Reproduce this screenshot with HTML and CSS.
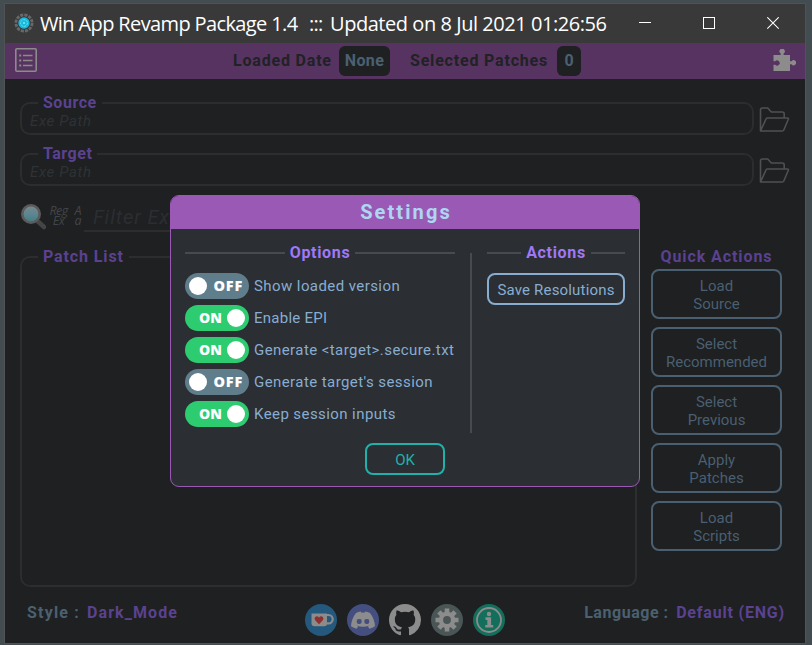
FILE: index.html
```html
<!DOCTYPE html>
<html lang="en">
<head>
<meta charset="utf-8">
<title>Win App Revamp Package 1.4</title>
<link rel="stylesheet" href="styles.css">
</head>
<body>
<div class="window">
  <header class="titlebar">
    <svg class="app-icon" width="20" height="20" viewBox="0 0 20 20">
      <circle cx="10" cy="10" r="8" fill="none" stroke="#686868" stroke-width="3" stroke-dasharray="3.1 1.1"/>
      <circle cx="10" cy="10" r="6.5" fill="#333b40"/>
      <circle cx="10" cy="10" r="5.7" fill="#19b9dc"/>
      <circle cx="10" cy="10" r="3.4" fill="none" stroke="#69e3f5" stroke-width="1" stroke-dasharray="2 1"/>
      <circle cx="10" cy="10" r="1" fill="#7cecfa"/>
    </svg>
    <h1 class="title"><span class="title-name">Win App Revamp Package 1.4</span><span class="title-sep">:::</span><span class="title-date">Updated on 8 Jul 2021 01:26:56</span></h1>
    <div class="controls">
      <svg width="12" height="14" viewBox="0 0 12 14"><path d="M0 5.5h12" stroke="#fff"/></svg>
      <svg width="12" height="14" viewBox="0 0 12 14"><rect x=".5" y=".5" width="11" height="11" fill="none" stroke="#fff"/></svg>
      <svg width="12" height="14" viewBox="0 0 12 14"><path d="M.3 .3l11.4 11.4M11.700 .3L.3 11.700" stroke="#fff" stroke-width="1.100"/></svg>
    </div>
  </header>

  <div class="statusbar">
    <svg width="22" height="24" viewBox="0 0 22 24" fill="none" stroke="#8b8b8b">
      <rect x=".8" y=".8" width="20.400" height="22.400" rx="1" stroke-width="1.600"/>
      <path d="M8 7.500h9.500M8 12.500h9.500M8 17.500h9.500" stroke-width="1.500"/>
      <path d="M4.200 7.500h2M4.200 12.500h2M4.200 17.500h2" stroke-width="2"/>
    </svg>
    <div class="status">
      <span class="status-label">Loaded Date</span><span class="badge badge-date">None</span>
      <span class="status-label status-patches">Selected Patches</span><span class="badge">0</span>
    </div>
    <svg class="puzzle" width="23" height="23" viewBox="0 0 23 23">
      <path fill="#8c8c8c" d="M.5 6h7.200V4.400a2.600 2.600 0 1 1 2.900 0V6H17v6.200h1.600a2.500 2.500 0 1 1 0 3H17V22H.5v-6.200h1.700a2.600 2.600 0 1 0 0-3.600H.5z"/>
    </svg>
  </div>

  <main class="content">
    <div class="path-row">
      <fieldset class="box path-box"><legend class="legend source">Source</legend><span class="placeholder">Exe Path</span></fieldset>
      <svg class="folder" width="31" height="26" viewBox="0 0 31 26"><path d="M1.500 24V3q0-2 2-2h5.200l3.600 4h10.900q2 0 2 2v4M1.500 24L7 12q.5-1 1.500-1h20q1.300 0 .8 1.300l-4.500 10.700q-.4 1-1.500 1H1.500z"/></svg>
    </div>
    <div class="path-row">
      <fieldset class="box path-box"><legend class="legend target">Target</legend><span class="placeholder">Exe Path</span></fieldset>
      <svg class="folder" width="31" height="26" viewBox="0 0 31 26"><path d="M1.500 24V3q0-2 2-2h5.200l3.600 4h10.900q2 0 2 2v4M1.500 24L7 12q.5-1 1.500-1h20q1.300 0 .8 1.300l-4.500 10.700q-.4 1-1.500 1H1.500z"/></svg>
    </div>

    <div class="filter-row">
      <svg width="26" height="27" viewBox="0 0 26 27">
        <defs><linearGradient id="lens" x1="0" y1="0" x2="0" y2="1"><stop offset="0" stop-color="#7b878c"/><stop offset=".5" stop-color="#5d8791"/><stop offset="1" stop-color="#447887"/></linearGradient></defs>
        <path d="M18 18.500l6 5.500" stroke="#454545" stroke-width="4.500" stroke-linecap="round"/>
        <circle cx="11" cy="11" r="8.700" fill="url(#lens)" stroke="#5b5b5b" stroke-width="2.600"/>
      </svg>
      <span class="flag flag-regex"><span>Reg</span><span>Ex</span></span>
      <span class="flag flag-case"><span>A</span><span>a</span></span>
      <span class="filter-input">Filter Expression</span>
    </div>

    <div class="workspace">
      <fieldset class="box patch-box"><legend class="legend patch">Patch List</legend></fieldset>
      <aside class="quick">
        <h2 class="quick-title">Quick Actions</h2>
        <button class="btn quick-btn">Load<br>Source</button>
        <button class="btn quick-btn">Select<br>Recommended</button>
        <button class="btn quick-btn">Select<br>Previous</button>
        <button class="btn quick-btn">Apply<br>Patches</button>
        <button class="btn quick-btn">Load<br>Scripts</button>
      </aside>
    </div>
  </main>

  <footer class="footer">
    <div class="setting"><span class="key style-key">Style :</span><span class="value style-value">Dark_Mode</span></div>
    <div class="links">
      <svg width="32" height="32" viewBox="0 0 32 32">
        <circle cx="16" cy="16" r="16" fill="#24587d"/>
        <path d="M22 11h1.500a4.200 4.200 0 0 1 0 8.400H21" fill="none" stroke="#8c8c8c" stroke-width="2.200"/>
        <path d="M6.500 9.500H22v10q0 2.700-2.700 2.700H9.500q-3 0-3-3z" fill="#8c8c8c"/>
        <path d="M14 20.200l-3.800-4q-1.500-2 .2-3.500 1.900-1.300 3.600.7 1.700-2 3.600-.7 1.700 1.500.2 3.500z" fill="#8f302f"/>
      </svg>
      <svg width="32" height="32" viewBox="0 0 32 32">
        <circle cx="16" cy="16" r="16" fill="#444f80"/>
        <path fill="#8c8c8c" fill-rule="evenodd" d="M9 9q2.200-1.300 4.800-1.500l.7 1.200q1.500-.2 3 0l.7-1.200q2.600.2 4.800 1.500 4.700 6 5 13.300-2.800 2-5.600 2.400l-1.500-2.200 1.600-.9q-6.500 2.400-13 0l1.600.9-1.500 2.200Q6.800 24.300 4 22.300 4.300 15 9 9zm3.200 6.200a2.100 2.400 0 1 0 0 4.700 2.100 2.400 0 1 0 0-4.700zm7.600 0a2.100 2.400 0 1 0 0 4.700 2.100 2.400 0 1 0 0-4.700z"/>
      </svg>
      <svg width="32" height="32" viewBox="0 0 16 16">
        <path fill="#8c8c8c" d="M8 0C3.580 0 0 3.580 0 8c0 3.540 2.290 6.530 5.470 7.590.4.070.55-.17.55-.38 0-.19-.01-.82-.01-1.490-2.010.37-2.530-.49-2.690-.94-.09-.23-.48-.94-.82-1.130-.28-.15-.68-.52-.01-.53.63-.01 1.080.58 1.230.82.72 1.210 1.870.87 2.330.66.07-.52.28-.87.510-1.070-1.780-.2-3.640-.89-3.640-3.950 0-.87.31-1.590.82-2.150-.08-.2-.36-1.020.08-2.120 0 0 .67-.21 2.200.82a7.420 7.420 0 0 1 4 0c1.530-1.040 2.200-.82 2.200-.82.44 1.100.16 1.920.08 2.120.51.56.82 1.270.82 2.150 0 3.070-1.870 3.750-3.650 3.950.29.25.54.73.54 1.480 0 1.070-.01 1.930-.01 2.200 0 .21.15.46.55.38A8.010 8.010 0 0 0 16 8c0-4.420-3.580-8-8-8z"/>
      </svg>
      <svg width="32" height="32" viewBox="0 0 32 32">
        <circle cx="16" cy="16" r="16" fill="#4a5555"/>
        <g stroke="#8c8c8c" stroke-width="4.600"><path d="M16 4.500v23M4.500 16h23M7.900 7.900l16.200 16.200M24.100 7.900L7.900 24.100"/></g>
        <circle cx="16" cy="16" r="8.300" fill="#8c8c8c"/><circle cx="16" cy="16" r="3.900" fill="#4a5555"/>
      </svg>
      <svg width="32" height="32" viewBox="0 0 32 32">
        <circle cx="16" cy="16" r="16" fill="#136f5b"/>
        <circle cx="16" cy="16" r="12" fill="none" stroke="#8c8c8c" stroke-width="1.800"/>
        <circle cx="16" cy="10" r="2.200" fill="#8c8c8c"/>
        <path d="M12.500 13.300h5.600v7.700h2.100v2.600h-8V21h2.100v-5h-1.800z" fill="#8c8c8c"/>
      </svg>
    </div>
    <div class="setting setting-right"><span class="key lang-key">Language :</span><span class="value lang-value">Default (ENG)</span></div>
  </footer>
</div>

<section class="modal">
  <h2 class="modal-header">Settings</h2>
  <div class="modal-body">
    <div class="options">
      <h3 class="group-title">Options</h3>
      <div class="option"><span class="toggle off"><i></i>OFF</span><span class="o-show">Show loaded version</span></div>
      <div class="option"><span class="toggle on">ON<i></i></span><span class="o-epi">Enable EPI</span></div>
      <div class="option"><span class="toggle on">ON<i></i></span><span>Generate &lt;target&gt;.secure.txt</span></div>
      <div class="option"><span class="toggle off"><i></i>OFF</span><span>Generate target's session</span></div>
      <div class="option"><span class="toggle on">ON<i></i></span><span>Keep session inputs</span></div>
    </div>
    <div class="divider"></div>
    <div class="actions">
      <h3 class="group-title">Actions</h3>
      <button class="btn save">Save Resolutions</button>
    </div>
  </div>
  <button class="btn ok">OK</button>
</section>
</body>
</html>
```
FILE: styles.css
```css
* { box-sizing: border-box; }

body {
  margin: 0;
  height: 645px;
  overflow: hidden;
  position: relative;
  background: #434c51;
  font: 15px/18px Roboto, "Liberation Sans", sans-serif;
}

h1, h2, h3 { margin: 0; }
svg { display: block; flex: none; }

/* Window frame */
.window {
  display: flex;
  flex-direction: column;
  width: 802px;
  height: 641px;
  margin: 3px 0 0 4px;
  border: 1px solid #505254;
  background: #1e2022;
  position: absolute;
}

.titlebar {
  display: flex;
  align-items: center;
  height: 39px;
  padding: 0 26px 0 9px;
  background: #393939;
  color: #fff;
}
.app-icon { margin-top: -1px; }
.title {
  display: flex;
  margin-left: 5px;
  font: 20px/28px "Open Sans", "Noto Sans", sans-serif;
  white-space: pre;
}
.title-name { width: 269px; margin-left: 1px; letter-spacing: -0.62px; }
.title-sep { width: 21px; letter-spacing: -0.8px; }
.title-date { letter-spacing: -0.45px; }
.controls { display: flex; gap: 52px; margin-left: auto; }

/* Status strip */
.statusbar {
  display: flex;
  align-items: center;
  justify-content: space-between;
  height: 36px;
  padding: 0 9px 0 10px;
  background: #573361;
}
.statusbar > svg { margin-top: -2px; }
.status {
  display: flex;
  align-items: center;
  margin-left: 4px;
  font-size: 16px;
  font-weight: bold;
  color: #202224;
}
.status-label { width: 106px; letter-spacing: .81px; }
.status-patches { width: 147px; margin-left: 20px; }
.badge {
  height: 30px;
  width: 24px;
  border-radius: 6px;
  background: #1e2022;
  color: #4b6071;
  line-height: 30px;
  text-align: center;
}
.badge-date { width: 51px; letter-spacing: .36px; }

/* Framed areas */
.content { padding: 14px 10px 0 15px; }
.box {
  flex: none;
  min-width: 0;
  margin: 0;
  padding: 0;
  border: 2px solid #2b2d2f;
  border-radius: 10px;
}
.legend {
  height: 20px;
  margin-left: 16px;
  padding: 0 5px;
  font-size: 16px;
  font-weight: bold;
  line-height: 20px;
  color: #5b4290;
}
.source, .target { letter-spacing: .52px; }
.patch { letter-spacing: .89px; }

.path-row { display: flex; height: 51px; }
.path-box { width: 734px; height: 42px; }
.placeholder {
  display: block;
  padding-left: 8px;
  font-style: italic;
  line-height: 17px;
  letter-spacing: .64px;
  color: #2f3235;
}
.folder {
  margin: 14px 0 0 5px;
  fill: none;
  stroke: #505050;
  stroke-width: 1.6;
  stroke-linejoin: round;
}

/* Filter */
.filter-row { display: flex; height: 52px; padding-top: 8px; }
.flag {
  display: flex;
  flex-direction: column;
  margin: 3px 0 0 2px;
  font: italic 12.5px/10px "Open Sans", sans-serif;
  text-align: center;
  color: #434547;
}
.flag-regex { width: 21px; letter-spacing: -0.6px; }
.flag-case { width: 12px; margin-left: 3px; }
.filter-input {
  width: 540px;
  height: 29px;
  padding-left: 9px;
  border-bottom: 2px solid #2b2d2f;
  font-size: 20px;
  font-style: italic;
  line-height: 28px;
  letter-spacing: .88px;
  color: #2b2e31;
}

/* Patch list and quick actions */
.workspace { display: flex; gap: 14px; }
.patch-box { width: 617px; height: 340px; }
.quick { display: flex; flex-direction: column; gap: 8px; width: 131px; }
.quick-title {
  height: 14px;
  font-size: 16px;
  line-height: 20px;
  letter-spacing: .91px;
  text-align: center;
  white-space: nowrap;
  color: #5b4290;
}
.btn {
  padding: 2px 0 0;
  border: 2px solid #4a5f70;
  border-radius: 8px;
  background: none;
  font: 15px/18px Roboto, "Liberation Sans", sans-serif;
  color: #4a5f70;
}
.quick-btn { height: 50px; }

/* Footer */
.footer {
  display: grid;
  grid-template-columns: 1fr 200px 1fr;
  align-items: start;
  margin-top: 16px;
  padding: 0 20px 0 22px;
  font-size: 16px;
  font-weight: bold;
}
.links { display: flex; gap: 10px; margin: 1px 0 0 -1px; }
.setting { display: flex; line-height: 20px; white-space: nowrap; }
.setting-right { justify-content: flex-end; }
.key { color: #4b6071; }
.value { color: #5b4290; }
.style-key { width: 60px; letter-spacing: 1.2px; }
.style-value { letter-spacing: 1.1px; }
.lang-key { width: 92px; letter-spacing: .54px; }
.lang-value { letter-spacing: .81px; }

/* Settings dialog */
.modal {
  position: absolute;
  left: 170px;
  top: 195px;
  width: 470px;
  height: 292px;
  border: 1px solid #9b59b6;
  border-radius: 9px;
  overflow: hidden;
  background: #2b2e33;
  color: #88add0;
}
.modal-header {
  height: 33px;
  padding-left: 2px;
  background: #9b59b6;
  font-size: 20px;
  line-height: 33px;
  letter-spacing: 2.1px;
  text-align: center;
  color: #aed6f1;
}
.modal-body { display: flex; padding: 14px 14px 0; }
.options { display: flex; flex-direction: column; gap: 6px; width: 270px; }
.group-title {
  display: flex;
  align-items: center;
  gap: 5px;
  height: 20px;
  margin-bottom: 4px;
  font-size: 16px;
  letter-spacing: .68px;
  color: #a078f5;
}
.group-title::before,
.group-title::after {
  content: "";
  flex: 1;
  height: 2px;
  background: #454b50;
}
.option {
  display: flex;
  align-items: center;
  gap: 5px;
  height: 26px;
  letter-spacing: .42px;
  white-space: nowrap;
}
.o-epi { letter-spacing: .25px; }
.toggle {
  display: flex;
  align-items: center;
  justify-content: space-between;
  width: 64px;
  height: 26px;
  border-radius: 13px;
  font: 800 14px/26px "Open Sans", sans-serif;
  color: #fff;
}
.toggle i { width: 18px; height: 18px; border-radius: 50%; background: #fff; }
.off { padding: 0 6px 0 4px; background: #607d8b; font-size: 14.500px; letter-spacing: .8px; }
.on { padding: 0 4px 0 14px; background: #2ecc71; letter-spacing: .2px; }
.divider { width: 2px; height: 180px; margin: 10px 15px 0; background: #454b50; }
.actions { width: 138px; }
.actions .group-title { margin-bottom: 10px; }
.save { width: 138px; height: 32px; border-color: #88add0; color: #88add0; letter-spacing: .18px; }
.ok { display: block; width: 80px; height: 32px; margin: 10px auto 0; border-color: #20b2aa; color: #20b2aa; }
```
